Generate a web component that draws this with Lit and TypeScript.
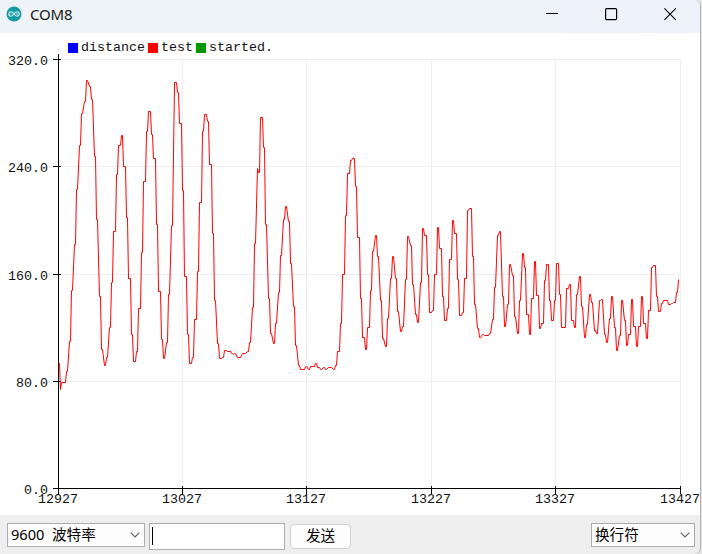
import { LitElement, html, svg, css } from "lit";
import { customElement, property } from "lit/decorators.js";

// Each sample: first x, last x, y (plot pixels)
const TRACE = `58 59 363;60 60 389;61 65 382;66 67 371;69 70 341;71 72 290;74 75 244;76 77 189;79 80 145;81 82 113;84 85 101;86 87 80;89 90 86;91 92 99;94 95 156;96 97 219;99 100 296;101 102 349;104 105 365;106 107 357;109 110 327;111 112 282;113 115 231;116 117 174;118 120 145;121 122 135;123 125 166;126 127 217;128 130 278;131 132 334;133 135 361;136 137 351;138 140 308;141 142 252;143 145 181;146 147 131;148 150 111;151 152 134;153 155 158;156 157 224;158 160 291;161 162 339;163 164 358;166 167 342;168 169 294;171 172 225;174 176 82;177 178 92;179 181 123;182 183 190;184 186 276;187 188 334;189 191 363;192 193 357;194 196 319;197 198 271;199 201 202;202 203 131;204 206 114;207 208 121;209 211 164;212 213 233;214 215 300;217 218 343;219 221 358;222 223 357;224 226 350;227 230 351;231 232 353;233 233 354;234 235 353;237 240 357;242 245 353;247 248 351;249 250 342;252 253 307;254 255 243;257 257 168;258 259 172;260 262 117;263 264 147;265 266 224;268 269 298;270 271 333;273 274 343;275 276 323;278 279 292;280 281 255;283 284 219;285 286 206;288 289 221;290 291 263;293 294 306;295 296 345;298 299 365;300 304 369;305 306 366;308 309 369;310 314 366;315 316 363;317 319 367;320 321 369;323 324 367;325 326 369;328 331 367;333 334 369;335 336 365;337 339 351;340 341 323;342 344 274;345 346 215;347 349 173;350 351 160;352 354 158;355 356 186;357 359 237;360 361 298;362 364 337;365 366 349;367 369 327;370 371 290;372 373 251;375 376 235;377 378 256;380 381 300;382 383 338;385 386 346;387 388 318;390 391 278;392 393 256;395 396 278;397 398 311;400 401 331;402 403 326;405 406 279;407 408 236;410 411 245;412 413 284;415 416 314;417 418 322;420 421 282;422 423 228;424 426 235;427 428 274;429 431 312;432 433 310;434 436 274;437 438 227;439 441 248;442 443 296;444 446 320;447 448 308;449 451 259;452 453 220;454 456 233;457 458 279;459 461 315;462 463 312;464 466 278;467 468 210;469 471 208;472 473 256;474 475 304;477 478 328;479 480 337;482 483 334;484 488 335;489 490 333;492 493 319;494 495 287;497 498 235;499 500 231;502 503 296;504 505 326;507 508 304;509 510 264;512 513 275;514 515 316;517 518 333;519 520 300;522 523 253;524 525 267;526 528 314;529 530 334;531 533 298;534 535 261;536 538 295;539 540 328;541 543 323;544 545 280;546 548 264;549 550 300;551 553 320;554 555 300;556 558 263;559 560 294;561 565 327;566 568 288;569 570 284;571 573 320;574 575 327;576 577 294;579 580 276;581 582 306;584 585 337;586 587 324;589 590 294;591 592 302;594 595 330;596 597 333;599 600 300;601 602 299;604 605 334;606 607 342;609 610 318;611 612 296;614 615 327;616 617 350;619 620 335;621 622 300;624 625 320;626 627 345;628 630 334;631 632 299;633 635 326;636 637 346;638 640 326;641 642 296;643 645 323;646 647 338;648 650 310;651 652 267;653 655 265;656 657 296;658 660 311;661 662 303;663 667 300;668 670 304;671 672 303;673 675 302;676 677 292;678 678 279`;

const POINTS = TRACE.split(";")
  .map((s) => {
    const [a, b, y] = s.split(" ").map(Number);
    return `${a + 0.5},${y + 0.5} ${b + 0.5},${y + 0.5}`;
  })
  .join(" ");

const Y_TICKS: [number, string][] = [[59, "320.0"], [166, "240.0"], [274, "160.0"], [381, "80.0"], [488, "0.0"]];
const X_TICKS: [number, string][] = [[58, "12927"], [182, "13027"], [306, "13127"], [431, "13227"], [555, "13327"], [680, "13427"]];
const SERIES: [number, string, string][] = [[68, "#0000ff", "distance"], [148, "#ff0000", "test"], [196, "#009900", "started."]];

@customElement("serial-plot")
class SerialPlot extends LitElement {
  static styles = css`
    :host { display: block; height: 482px; background: #fff; }
    svg { display: block; }
    .label { font: 12.5px "Liberation Mono", monospace; fill: #111; }
    .grid { stroke: #eee; }
    .axis { stroke: #000; }
    .grid, .axis { shape-rendering: crispEdges; fill: none; }
    .trace { fill: none; stroke: #f00; stroke-width: 1; }
  `;
  private label(x: number, y: number, text: string) {
    return svg`<text class="label" x=${x} y=${y} textLength=${text.length * 8} lengthAdjust="spacingAndGlyphs">${text}</text>`;
  }
  render() {
    return html`<svg width="700" height="482" viewBox="0 33 700 482">
      ${SERIES.map(([x, color, name]) => svg`
        <rect x=${x} y="43" width="10" height="10" fill=${color}></rect>
        ${this.label(x + 13, 51, name)}`)}
      ${Y_TICKS.slice(0, 4).map(([y]) => svg`<path class="grid" d="M59 ${y + 0.5}H681"></path>`)}
      ${X_TICKS.slice(1).map(([x]) => svg`<path class="grid" d="M${x + 0.5} 59V488"></path>`)}
      <path class="axis" d="M58.5 54V494M53 488.5H681"></path>
      ${Y_TICKS.map(([y, t]) => svg`
        <path class="axis" d="M53 ${y + 0.5}H61"></path>
        ${this.label(48 - t.length * 8, y + 6, t)}`)}
      ${X_TICKS.map(([x, t]) => svg`
        <path class="axis" d="M${x + 0.5} 486V494"></path>
        ${this.label(x - 20, 503, t)}`)}
      <polyline class="trace" points=${POINTS}></polyline>
    </svg>`;
  }
}

@customElement("combo-box")
class ComboBox extends LitElement {
  @property() label = "";
  static styles = css`
    :host {
      display: flex; align-items: center; justify-content: space-between;
      box-sizing: border-box; height: 24px; padding: 0 4px 0 3px;
      border: 1px solid #abadb3; background: #fdfdfd; white-space: pre;
    }
    span { padding-bottom: 2px; }
    svg { flex: none; }
  `;
  render() {
    return html`<span>${this.label}</span>
      <svg width="10" height="6" viewBox="0 0 10 6"><path d="M.7 .7L5 5L9.3 .7" fill="none" stroke="#606060" stroke-width="1.1"></path></svg>`;
  }
}

@customElement("app-root")
class AppRoot extends LitElement {
  static styles = css`
    :host { display: block; width: 702px; height: 554px; overflow: hidden; background: #e4e4e4; }
    .window {
      box-sizing: border-box; width: 701px; height: 554px; overflow: hidden;
      border-right: 1px solid #b0b2b4; border-radius: 0 6px 6px 0; background: #eee;
    }
    .title {
      display: flex; align-items: center; height: 33px; box-sizing: border-box;
      padding: 0 23px 4px 6px; background: linear-gradient(90deg, #eef3f8 75%, #edf2fb);
      font: 15px "Noto Sans", sans-serif; color: #191919;
    }
    .logo { margin: 0 8px 1px 0; }
    .name { width: 43px; padding-bottom: 2px; letter-spacing: -0.2px; }
    .controls { display: flex; gap: 46px; margin-left: auto; }
    .bar {
      display: flex; align-items: flex-start; height: 39px; box-sizing: border-box;
      padding: 8px 5px 0 7px; font: 14.6px/22px "Noto Sans", "Noto Sans CJK SC", sans-serif; color: #000;
    }
    .baud { width: 138px; }
    .ending { width: 104px; margin-left: auto; }
    .entry {
      box-sizing: border-box; width: 136px; height: 27px; margin-left: 4px; padding: 3px 2px;
      border: 1px solid #abadb3; background: #fff;
    }
    .caret { width: 1px; height: 18px; background: #000; }
    .send {
      box-sizing: border-box; width: 61px; height: 25px; margin: 1px 0 0 5px; padding: 0 0 3px;
      border: 1px solid #d0d0d0; border-radius: 4px; background: #fdfdfd; font: inherit; line-height: 20px; color: #000;
    }
  `;
  render() {
    return html`<div class="window">
      <div class="title">
        <svg class="logo" width="16" height="16" viewBox="0 0 16 16">
          <circle cx="8" cy="8" r="7.5" fill="#149aa0"></circle>
          <path d="M8 8C6.8 6.3 6 5.8 5 5.8A2.2 2.2 0 0 0 5 10.2C6 10.2 6.8 9.7 8 8C9.2 6.3 10 5.8 11 5.8A2.2 2.2 0 0 1 11 10.2C10 10.2 9.2 9.7 8 8Z" fill="none" stroke="#d5eff0" stroke-width="1.1"></path>
          <path d="M4.2 8H5.8M10.2 8H11.8M11 7.2V8.8" stroke="#d5eff0" stroke-width=".6"></path>
        </svg>
        <span class="name">COM8</span>
        <div class="controls">
          <svg width="13" height="13" viewBox="0 0 13 13"><path d="M0 5.5H12" stroke="#000"></path></svg>
          <svg width="13" height="13" viewBox="0 0 13 13"><rect x=".6" y=".6" width="11" height="11" rx="1" fill="none" stroke="#000" stroke-width="1.2"></rect></svg>
          <svg width="13" height="13" viewBox="0 0 13 13"><path d="M.4 .4L11.8 11.8M11.8 .4L.4 11.8" stroke="#000" stroke-width="1.1"></path></svg>
        </div>
      </div>
      <serial-plot></serial-plot>
      <div class="bar">
        <combo-box class="baud" label="9600  波特率"></combo-box>
        <div class="entry"><div class="caret"></div></div>
        <button class="send">发送</button>
        <combo-box class="ending" label="换行符"></combo-box>
      </div>
    </div>`;
  }
}
